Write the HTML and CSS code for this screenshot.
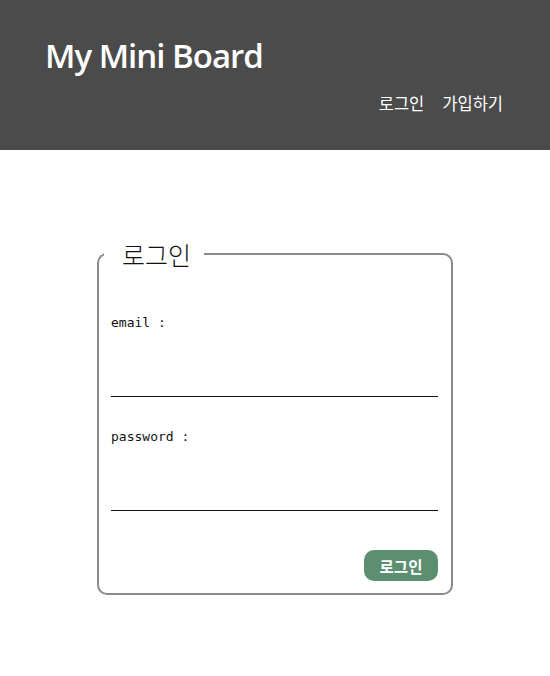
FILE: index.html
```html
<!DOCTYPE html>
<html lang="ko">
<head>
<meta charset="utf-8">
<link rel="stylesheet" href="styles.css">
</head>
<body>
<header class="site-header">
  <h1 class="site-title">My Mini Board</h1>
  <nav class="site-nav">
    <a href="#" class="nav-link">로그인</a>
    <a href="#" class="nav-link">가입하기</a>
  </nav>
</header>
<main class="main">
  <form class="login-form">
    <fieldset class="login-box">
      <legend class="login-legend">로그인</legend>
      <label class="field-label">email :</label>
      <input class="field-input" type="text">
      <label class="field-label second">password :</label>
      <input class="field-input" type="password">
      <div class="actions">
        <button type="button" class="login-btn">로그인</button>
      </div>
    </fieldset>
  </form>
</main>
</body>
</html>
```
FILE: styles.css
```css
html, body {
  margin: 0;
  padding: 0;
  background: #fff;
}
body {
  font-family: "Noto Sans CJK KR", "Noto Sans", sans-serif;
}
.site-header {
  background: #4b4b4b;
  height: 150px;
  box-sizing: border-box;
  padding: 33px 47px 0 45px;
  display: flex;
  flex-direction: column;
}
.site-title {
  margin: 0;
  color: #fff;
  font-family: "Open Sans", sans-serif;
  font-weight: 600;
  font-size: 33px;
  line-height: 46px;
  letter-spacing: -1px;
}
.site-nav {
  align-self: flex-end;
  display: flex;
  gap: 18px;
  margin-top: 13px;
}
.nav-link {
  color: #fff;
  text-decoration: none;
  font-size: 16.5px;
  line-height: 22px;
}
.main {
  padding-top: 91px;
}
.login-form {
  width: 356px;
  margin: 0 auto;
}
.login-box {
  margin: 0;
  border: 2px solid #8a8a8a;
  border-radius: 10px;
  padding: 46px 13px 12px 12px;
  display: flex;
  flex-direction: column;
}
.login-legend {
  margin-left: -7px;
  padding: 0 13px 0 18px;
  font-size: 25px;
  font-weight: 300;
  line-height: 26px;
  color: #111;
}
.field-label {
  font-family: "DejaVu Sans Mono", monospace;
  font-size: 13px;
  line-height: 20px;
  color: #111;
}
.field-label.second {
  margin-top: 30px;
}
.field-input {
  display: block;
  height: 64px;
  box-sizing: border-box;
  border: none;
  border-bottom: 1px solid #111;
  outline: none;
  padding: 0;
  margin: 0;
  width: 100%;
  background: transparent;
}
.actions {
  display: flex;
  justify-content: flex-end;
  margin-top: 39px;
}
.login-btn {
  background: #5b8f6f;
  color: #fff;
  border: none;
  border-radius: 10px;
  width: 74px;
  height: 31px;
  font-family: "Noto Sans CJK KR", sans-serif;
  font-weight: 700;
  font-size: 15.5px;
  padding: 0;
}
```
